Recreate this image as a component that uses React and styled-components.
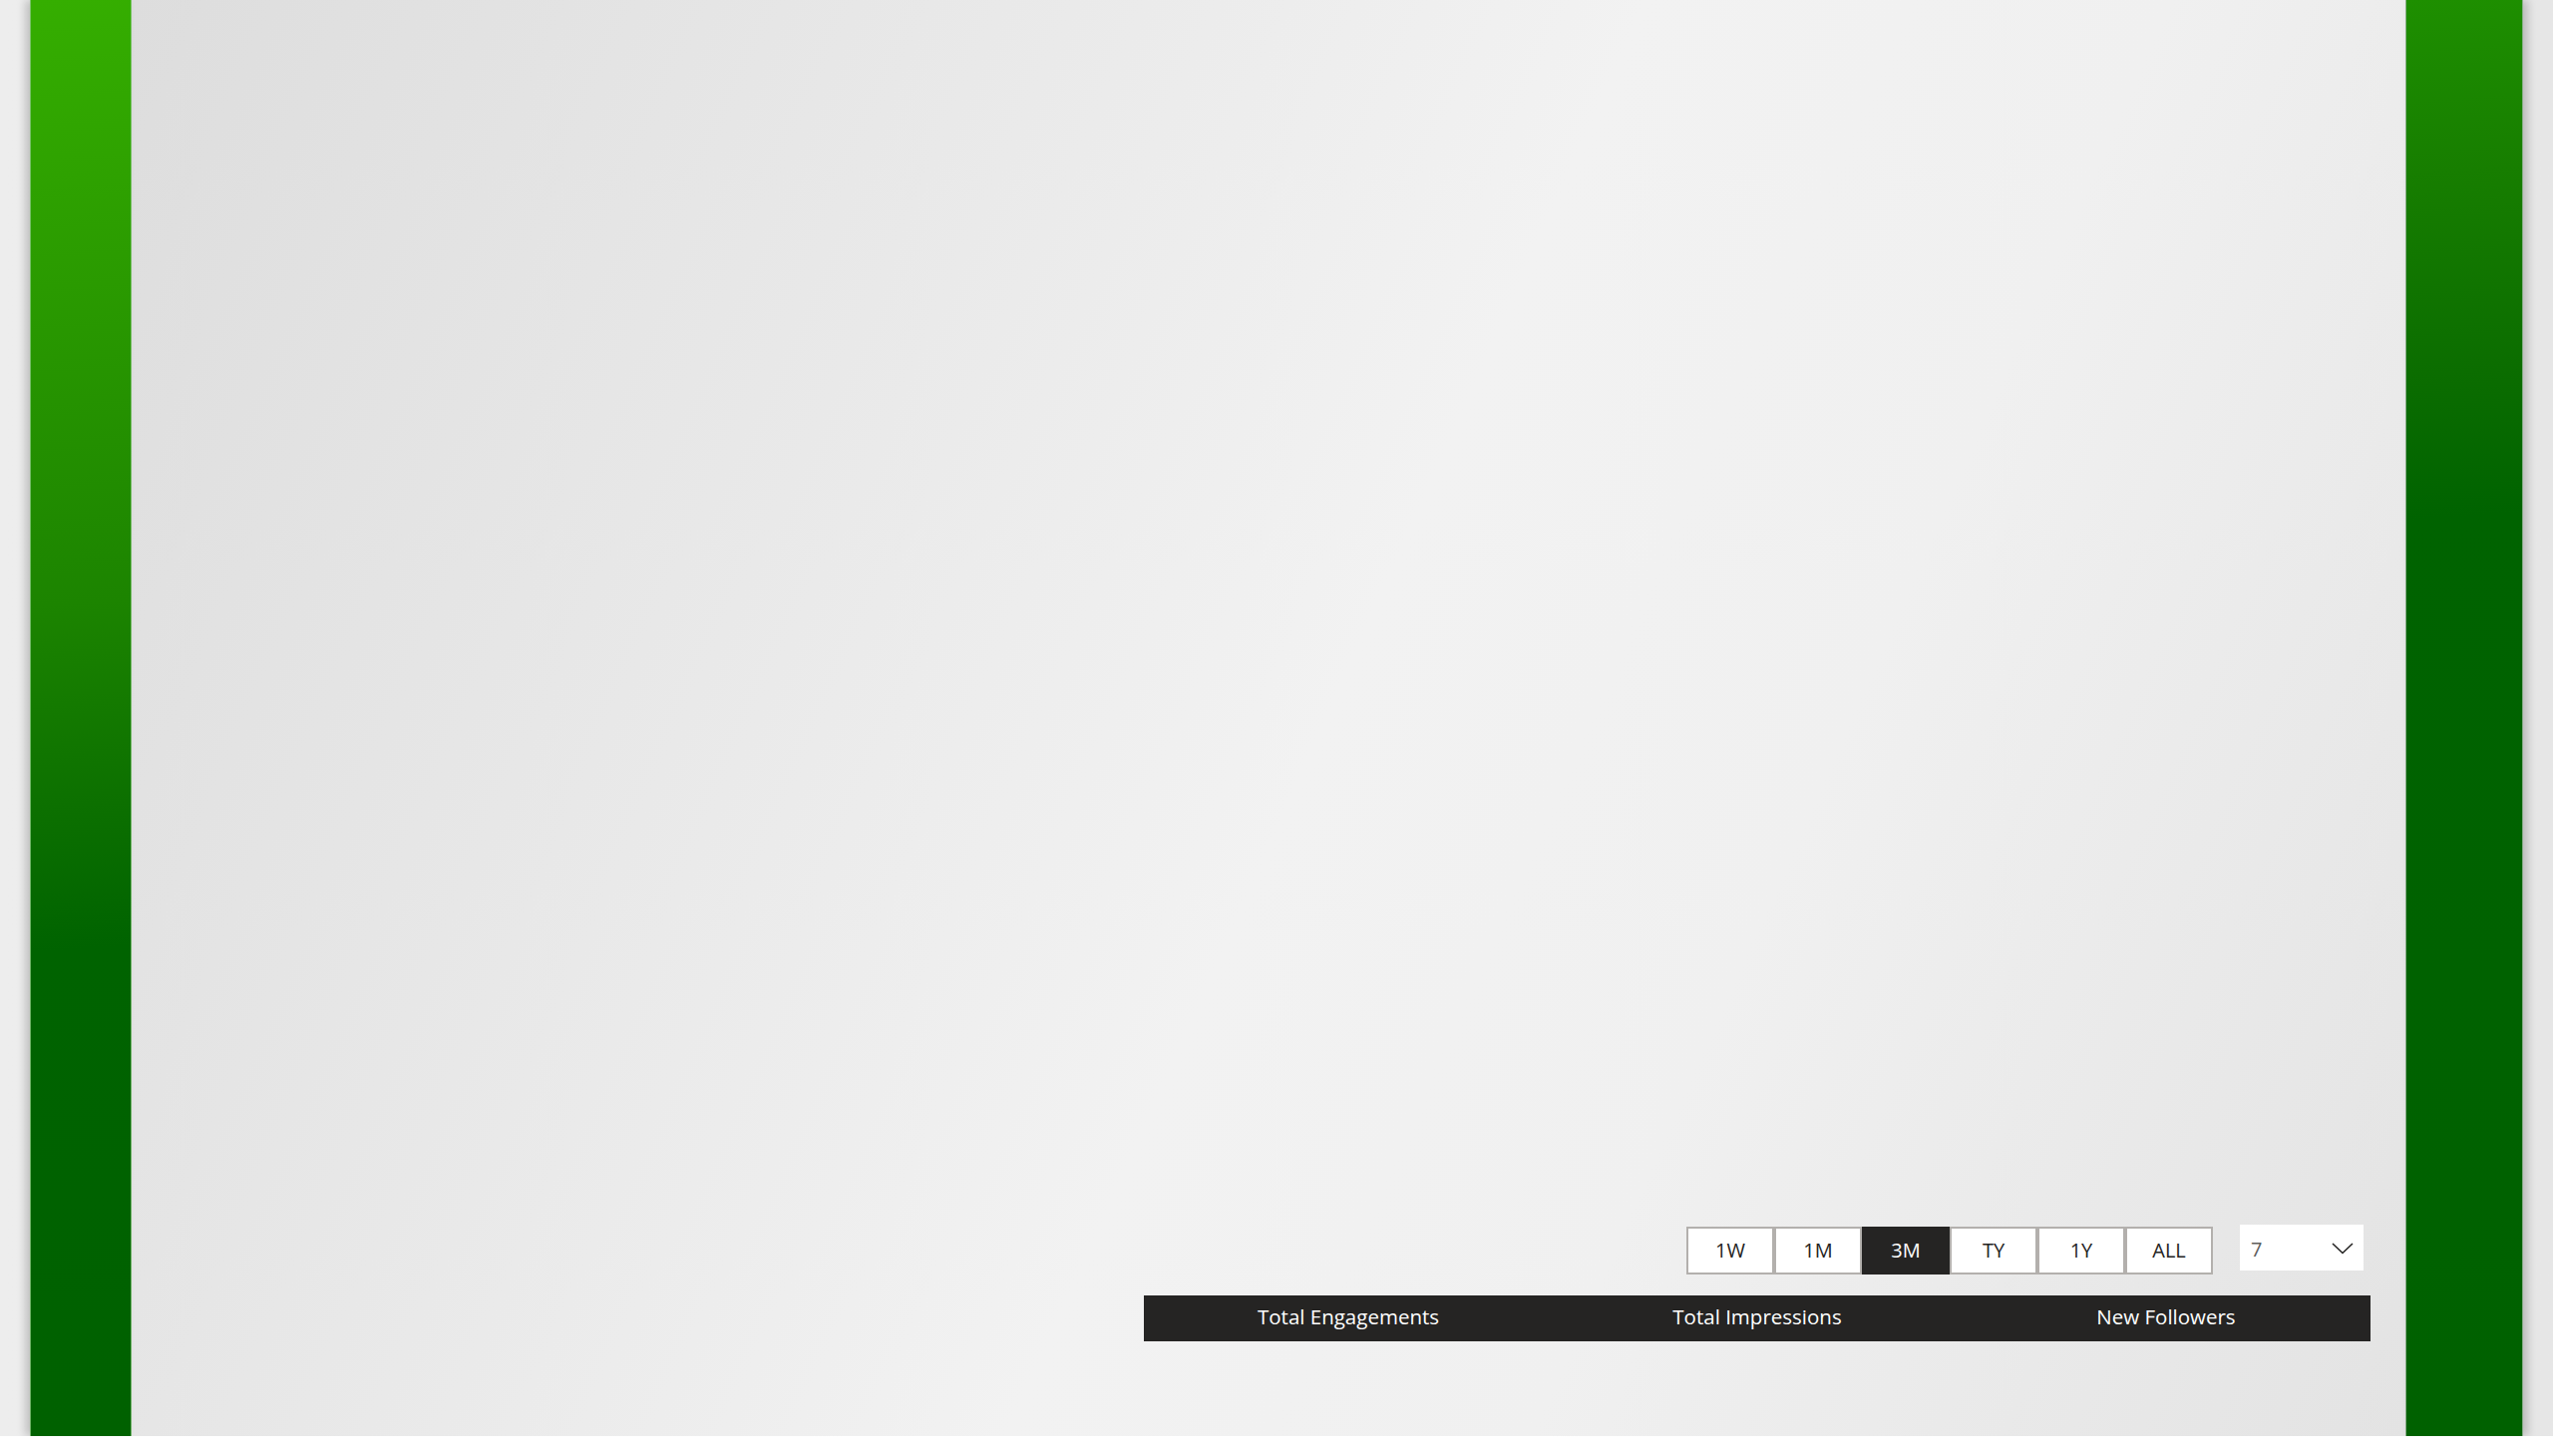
import React, { useState } from "react";
import styled, { createGlobalStyle } from "styled-components";

const Global = createGlobalStyle`
  html, body { margin: 0; padding: 0; background: #ffffff; }
  body { font-family: "Open Sans", "Noto Sans", "Liberation Sans", sans-serif; }
  * { box-sizing: border-box; }
`;

const Page = styled.div`
  width: 2560px;
  height: 1440px;
  display: flex;
  padding: 0 30px;
  background: linear-gradient(to right, #ededed, #e6e6e6);
  overflow: hidden;
`;

const SideBar = styled.div`
  flex: 0 0 ${(p) => p.$w}px;
  height: 100%;
  position: relative;
  z-index: 1;
  background: ${(p) => p.$bg};
  border-left: 1px solid ${(p) => p.$edge};
  border-right: 1px solid ${(p) => p.$edge};
  box-shadow: ${(p) => p.$shadow};
`;

const Canvas = styled.main`
  flex: 1;
  height: 100%;
  background: linear-gradient(114deg, #dddddd 0%, #e9e9e9 30%, #f2f2f2 52%, #f0f0f0 70%, #e3e3e3 100%);
  display: flex;
  flex-direction: column;
  justify-content: flex-end;
  align-items: flex-end;
  padding-bottom: 95px;
`;

const Controls = styled.div`
  display: flex;
  align-items: flex-start;
  gap: 27px;
  margin-right: 42px;
  margin-bottom: 21px;
`;

const ButtonGroup = styled.div`
  display: flex;
  margin-top: 2px;
`;

const RangeButton = styled.button`
  width: 88px;
  height: 48px;
  border: 2px solid ${(p) => (p.$active ? "#252423" : "#b3b0ad")};
  background: ${(p) => (p.$active ? "#252423" : "#ffffff")};
  color: ${(p) => (p.$active ? "#ffffff" : "#252423")};
  font-family: inherit;
  font-size: 20px;
  line-height: 1;
  padding: 0 0 1px;
  display: flex;
  align-items: center;
  justify-content: center;
  cursor: pointer;
`;

const Dropdown = styled.div`
  width: 124px;
  height: 46px;
  background: #ffffff;
  display: flex;
  align-items: center;
  justify-content: space-between;
  padding: 2px 10px 0 11px;
  color: #605e5c;
  font-size: 20px;
`;

const TabBar = styled.div`
  width: 1230px;
  height: 46px;
  margin-right: 35px;
  background: #252423;
  display: grid;
  grid-template-columns: repeat(3, 1fr);
  align-items: center;
  padding-bottom: 3px;
`;

const Tab = styled.div`
  text-align: center;
  color: #ffffff;
  font-size: 20.5px;
  line-height: 1;
`;

const Chevron = () => (
  <svg width="22" height="12" viewBox="0 0 22 12" fill="none">
    <polyline points="1,1 11,10.5 21,1" stroke="#252423" strokeWidth="1.6" />
  </svg>
);

const ranges = ["1W", "1M", "3M", "TY", "1Y", "ALL"];

export default function App() {
  const [active, setActive] = useState("3M");
  return (
    <>
      <Global />
      <Page>
        <SideBar
          $w={102}
          $bg="linear-gradient(176deg, #35ae00 0%, #2a9a00 20%, #1c8400 42%, #0c7000 56%, #006300 66%, #006100 100%)"
          $edge="rgba(140, 200, 130, 0.8)"
          $shadow="-5px 0 8px rgba(0,0,0,0.18)"
        />
        <Canvas>
          <Controls>
            <ButtonGroup>
              {ranges.map((r) => (
                <RangeButton key={r} $active={r === active} onClick={() => setActive(r)}>
                  {r}
                </RangeButton>
              ))}
            </ButtonGroup>
            <Dropdown>
              <span>7</span>
              <Chevron />
            </Dropdown>
          </Controls>
          <TabBar>
            <Tab>Total Engagements</Tab>
            <Tab>Total Impressions</Tab>
            <Tab>New Followers</Tab>
          </TabBar>
        </Canvas>
        <SideBar
          $w={118}
          $bg="linear-gradient(176deg, #1e8f00 0%, #177e00 12%, #0b6d00 26%, #006300 36%, #006100 100%)"
          $edge="rgba(150, 180, 150, 0.9)"
          $shadow="5px 0 8px rgba(0,0,0,0.18)"
        />
      </Page>
    </>
  );
}
